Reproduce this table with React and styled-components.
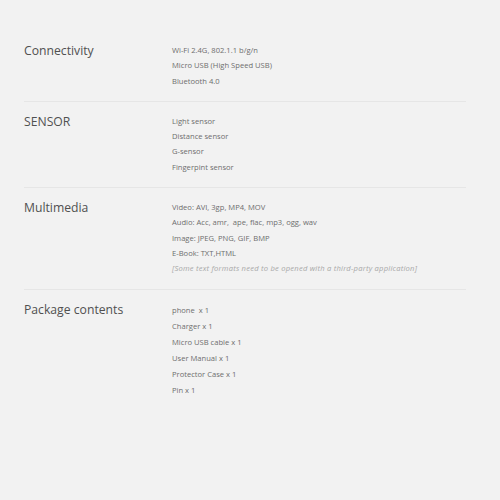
import React from 'react';
import styled, { createGlobalStyle } from 'styled-components';

const GlobalStyle = createGlobalStyle`
  html, body {
    margin: 0;
    padding: 0;
    background: #f2f2f2;
  }
  body {
    font-family: "Open Sans", "Liberation Sans", sans-serif;
  }
`;

const Page = styled.div`
  width: 500px;
  height: 500px;
  box-sizing: border-box;
  padding: 31px 34px 0 24px;
  background: #f2f2f2;
`;

const Section = styled.section`
  display: grid;
  grid-template-columns: 148px 1fr;
  padding: 12px 0;
  border-bottom: ${(p) => (p.$last ? 'none' : '1px solid #e6e6e6')};
`;

const Title = styled.h3`
  margin: 0;
  font-size: 12.2px;
  font-weight: 400;
  line-height: 15px;
  color: #505050;
`;

const List = styled.ul`
  margin: 0;
  padding: 0;
  list-style: none;
`;

const Item = styled.li`
  font-size: 7.6px;
  line-height: ${(p) => p.$lh || '15.3px'};
  color: ${(p) => (p.$note ? '#a8a8a8' : '#6e6e6e')};
  font-style: ${(p) => (p.$note ? 'italic' : 'normal')};
  letter-spacing: ${(p) => (p.$note ? '0.22px' : '0')};
  white-space: pre;
`;

const specs = [
  {
    title: 'Connectivity',
    items: ['Wi-Fi 2.4G, 802.1.1 b/g/n', 'Micro USB (High Speed USB)', 'Bluetooth 4.0'],
  },
  {
    title: 'SENSOR',
    items: ['Light sensor', 'Distance sensor', 'G-sensor', 'Fingerpint sensor'],
  },
  {
    title: 'Multimedia',
    items: [
      'Video: AVI, 3gp, MP4, MOV',
      'Audio: Acc, amr,  ape, flac, mp3, ogg, wav',
      'Image: JPEG, PNG, GIF, BMP',
      'E-Book: TXT,HTML',
    ],
    note: '[Some text formats need to be opened with a third-party application]',
  },
  {
    title: 'Package contents',
    items: ['phone  x 1', 'Charger x 1', 'Micro USB cable x 1', 'User Manual x 1', 'Protector Case x 1', 'Pin x 1'],
    lh: '16px',
  },
];

function App() {
  return (
    <Page>
      <GlobalStyle />
      {specs.map((s, i) => (
        <Section key={s.title} $last={i === specs.length - 1}>
          <Title>{s.title}</Title>
          <List>
            {s.items.map((it) => (
              <Item key={it} $lh={s.lh}>{it}</Item>
            ))}
            {s.note && <Item $note>{s.note}</Item>}
          </List>
        </Section>
      ))}
    </Page>
  );
}

export default App;
